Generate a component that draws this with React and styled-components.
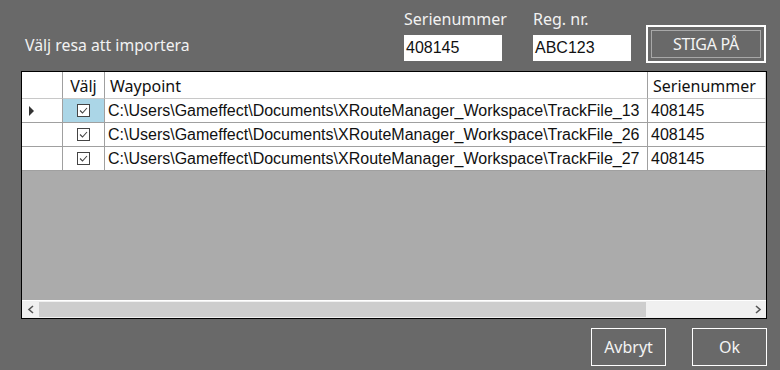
import styled, { createGlobalStyle } from "styled-components";

const Global = createGlobalStyle`
    html, body {
        margin: 0;
        padding: 0;
        background: #696969;
    }
    body {
        font-family: "Noto Sans", "DejaVu Sans", sans-serif;
        color: #f2f2f2;
    }
`

const Dialog = styled.div`
    width: 780px;
    height: 370px;
    box-sizing: border-box;
    display: flex;
    flex-direction: column;
`

const Top = styled.div`
    display: flex;
    height: 71px;
    padding-left: 25px;
`

const Title = styled.div`
    flex: 1;
    padding-top: 34px;
    font-size: 15.8px;
    line-height: 22px;
`

const Field = styled.div`
    display: flex;
    flex-direction: column;
    width: 98px;
    margin-right: ${props => props.gap}px;
`

const FieldLabel = styled.label`
    font-size: 16px;
    padding-top: 8px;
    height: 35px;
    box-sizing: border-box;
    line-height: 22px;
`

const TextBox = styled.div`
    background: #fff;
    color: #111;
    height: 26px;
    box-sizing: border-box;
    padding: 3px 2px 0;
    font-family: "Liberation Sans", Arial, sans-serif;
    font-size: 16px;
    line-height: 20px;
`

const OutlineButton = styled.button`
    box-sizing: border-box;
    width: ${props => props.w}px;
    height: ${props => props.h}px;
    margin-top: ${props => props.top || 0}px;
    margin-left: ${props => props.left || 0}px;
    background: transparent;
    border: ${props => props.thick ? 2 : 1}px solid #fff;
    color: #f4f4f4;
    font-family: "Noto Sans", sans-serif;
    font-size: 16px;
    padding: 0;
    display: flex;
    align-items: center;
    justify-content: center;
`

const Inner = styled.span`
    box-sizing: border-box;
    width: calc(100% - 6px);
    height: calc(100% - 6px);
    border: 1px solid #a8a8a8;
    display: flex;
    align-items: center;
    justify-content: center;
    letter-spacing: -0.3px;
`

const Grid = styled.div`
    margin-left: 21px;
    width: 746px;
    height: 248px;
    box-sizing: border-box;
    border: 1px solid #000;
    background: #ababab;
    display: flex;
    flex-direction: column;
`

const Row = styled.div`
    display: grid;
    grid-template-columns: 41px 42px 543px 118px;
    height: ${props => props.h}px;
`

const Cell = styled.div`
    box-sizing: border-box;
    border-right: 1px solid ${props => props.last ? "#d8d8d8" : "#a0a0a0"};
    border-bottom: 1px solid #a0a0a0;
    background: ${props => props.selected ? "#abd6e7" : "#fff"};
    color: #111;
    display: flex;
    align-items: center;
    justify-content: ${props => props.center ? "center" : "flex-start"};
    padding-left: ${props => props.pad || 0}px;
    overflow: hidden;
    white-space: nowrap;
    font-family: "Liberation Sans", Arial, sans-serif;
    font-size: 16px;
`

const HeadCell = styled(Cell)`
    font-family: "Noto Sans", sans-serif;
    font-size: 16px;
    border-bottom-color: #c8c8c8;
    padding-top: 1px;
`

const Filler = styled.div`
    flex: 1;
    border-bottom: 1px solid #fff;
`

const ScrollBar = styled.div`
    height: 17px;
    display: flex;
    background: #f0f0f0;
`

const ScrollArrow = styled.div`
    width: 17px;
    display: flex;
    align-items: center;
    justify-content: center;
`

const Thumb = styled.div`
    width: 607px;
    margin: 1px 0 1px 0;
    background: #cdcdcd;
`

const Track = styled.div`
    flex: 1;
`

const Bottom = styled.div`
    display: flex;
    justify-content: flex-end;
    padding-right: 13px;
`

const CheckBox = () => (
    <svg width="13" height="13" viewBox="0 0 13 13">
        <rect x="0.5" y="0.5" width="12" height="12" fill="#fff" stroke="#444" />
        <path d="M3 6.5 L5.5 9 L10 4" fill="none" stroke="#444" strokeWidth="1.1" />
    </svg>
);

const Arrow = ({ dir }) => (
    <svg width="8" height="9" viewBox="0 0 8 9">
        <path
            d={dir === "left" ? "M6 1 L2 4.5 L6 8" : "M2 1 L6 4.5 L2 8"}
            fill="none"
            stroke="#555"
            strokeWidth="1.6"
        />
    </svg>
);

const Pointer = () => (
    <svg width="6" height="10" viewBox="0 0 6 10">
        <path d="M0 0 L5 5 L0 10 Z" fill="#333" />
    </svg>
);

const rows = ["13", "26", "27"];

export default function App() {
    return (
        <Dialog>
            <Global />
            <Top>
                <Title>Välj resa att importera</Title>
                <Field gap={31}>
                    <FieldLabel>Serienummer</FieldLabel>
                    <TextBox>408145</TextBox>
                </Field>
                <Field gap={15}>
                    <FieldLabel>Reg. nr.</FieldLabel>
                    <TextBox>ABC123</TextBox>
                </Field>
                <OutlineButton w={120} h={38} top={25} thick>
                    <Inner>STIGA PÅ</Inner>
                </OutlineButton>
                <div style={{ width: 14 }} />
            </Top>
            <Grid>
                <Row h={27}>
                    <HeadCell />
                    <HeadCell center>Välj</HeadCell>
                    <HeadCell pad={5}>Waypoint</HeadCell>
                    <HeadCell pad={5} last>Serienummer</HeadCell>
                </Row>
                {rows.map((n, i) => (
                    <Row h={24} key={n}>
                        <Cell pad={7}>{i === 0 && <Pointer />}</Cell>
                        <Cell center selected={i === 0}><CheckBox /></Cell>
                        <Cell pad={3}>
                            C:\Users\Gameffect\Documents\XRouteManager_Workspace\TrackFile_{n}
                        </Cell>
                        <Cell pad={3} last>408145</Cell>
                    </Row>
                ))}
                <Filler />
                <ScrollBar>
                    <ScrollArrow><Arrow dir="left" /></ScrollArrow>
                    <Thumb />
                    <Track />
                    <ScrollArrow><Arrow dir="right" /></ScrollArrow>
                </ScrollBar>
            </Grid>
            <Bottom>
                <OutlineButton w={75} h={38} top={9}>Avbryt</OutlineButton>
                <OutlineButton w={75} h={38} top={9} left={26}>Ok</OutlineButton>
            </Bottom>
        </Dialog>
    );
}
